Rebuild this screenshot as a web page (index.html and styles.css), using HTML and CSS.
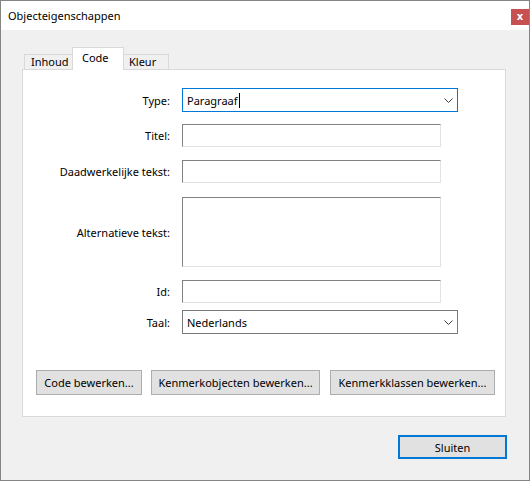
FILE: index.html
```html
<!DOCTYPE html>
<html lang="nl">
<head>
<meta charset="utf-8">
<title>Objecteigenschappen</title>
<link rel="stylesheet" href="styles.css">
</head>
<body>
<div class="window">
  <div class="titlebar">
    <span class="title">Objecteigenschappen</span>
    <span class="close">x</span>
  </div>
  <div class="body">
    <div class="tabs">
      <div class="tab tab-first">Inhoud</div>
      <div class="tab tab-active">Code</div>
      <div class="tab tab-last">Kleur</div>
    </div>
    <div class="panel">
      <div class="form">
        <div class="row row-type">
          <label class="label">Type:</label>
          <div class="select select-focus">
            <span class="value">Paragraaf<span class="caret"></span></span>
            <svg class="chev" width="9" height="5" viewBox="0 0 9 5"><polyline points="0.5,0.5 4.5,4.5 8.5,0.5" fill="none" stroke="#3c3c3c" stroke-width="1"/></svg>
          </div>
        </div>
        <div class="row row-titel">
          <label class="label">Titel:</label>
          <div class="input"></div>
        </div>
        <div class="row row-daad">
          <label class="label">Daadwerkelijke tekst:</label>
          <div class="input"></div>
        </div>
        <div class="row row-alt">
          <label class="label">Alternatieve tekst:</label>
          <div class="input textarea"></div>
        </div>
        <div class="row row-id">
          <label class="label">Id:</label>
          <div class="input"></div>
        </div>
        <div class="row row-taal">
          <label class="label">Taal:</label>
          <div class="select">
            <span class="value">Nederlands</span>
            <svg class="chev" width="9" height="5" viewBox="0 0 9 5"><polyline points="0.5,0.5 4.5,4.5 8.5,0.5" fill="none" stroke="#3c3c3c" stroke-width="1"/></svg>
          </div>
        </div>
      </div>
      <div class="actions">
        <button class="btn btn-code">Code bewerken...</button>
        <button class="btn btn-obj">Kenmerkobjecten bewerken...</button>
        <button class="btn btn-klas">Kenmerkklassen bewerken...</button>
      </div>
    </div>
    <div class="footer">
      <button class="btn btn-close">Sluiten</button>
    </div>
  </div>
</div>
</body>
</html>
```
FILE: styles.css
```css
* { box-sizing: border-box; }
html, body { margin: 0; padding: 0; }
body {
  width: 530px;
  height: 481px;
  font-family: "Noto Sans", "Open Sans", sans-serif;
  font-size: 11px;
  color: #000;
  background: #f0f0f0;
}
.window {
  width: 530px;
  height: 481px;
  border: 1px solid #858585;
  display: flex;
  flex-direction: column;
  background: #f0f0f0;
}
.titlebar {
  height: 29px;
  background: #fff;
  display: flex;
  justify-content: space-between;
  align-items: flex-start;
  flex: none;
}
.title {
  padding-left: 7px;
  line-height: 29px;
}
.close {
  margin-top: 8px;
  width: 18px;
  height: 16px;
  background: #c75050;
  color: #fff;
  font-family: "DejaVu Sans", sans-serif;
  font-weight: bold;
  font-size: 10px;
  line-height: 15px;
  text-align: center;
}
.body {
  flex: 1;
  padding: 17px 23px 0 21px;
  display: flex;
  flex-direction: column;
}
.tabs {
  display: flex;
  align-items: flex-end;
  height: 22px;
  padding-left: 2px;
}
.tab {
  height: 15px;
  line-height: 13px;
  border: 1px solid #d9d9d9;
  border-bottom: none;
  background: #f0f0f0;
  white-space: nowrap;
}
.tab-first { width: 49px; padding-left: 6px; }
.tab-active {
  position: relative;
  z-index: 1;
  width: 52px;
  height: 23px;
  margin-bottom: -1px;
  margin-left: -1px;
  padding-left: 9px;
  padding-top: 2px;
  line-height: 15px;
  background: #fff;
}
.tab-last { width: 46px; margin-left: -1px; padding-left: 5px; }
.panel {
  width: 484px;
  height: 348px;
  background: #fff;
  border: 1px solid #d9d9d9;
  padding: 18px 0 0 0;
}
.form {
  display: flex;
  flex-direction: column;
}
.row {
  display: flex;
  align-items: center;
}
.label {
  width: 147px;
  margin-right: 12px;
  text-align: right;
  white-space: nowrap;
}
.row-titel { margin-top: 12px; }
.row-daad { margin-top: 13px; }
.row-alt { margin-top: 14px; }
.row-id { margin-top: 13px; }
.row-taal { margin-top: 7px; }
.select {
  width: 276px;
  height: 24px;
  border: 1px solid #7a7a7a;
  display: flex;
  align-items: center;
  justify-content: space-between;
  padding: 0 4px 0 4px;
  background: #fff;
}
.select-focus { border-color: #0078d7; }
.value { display: flex; align-items: center; }
.caret {
  display: inline-block;
  width: 1px;
  height: 15px;
  background: #000;
  margin-left: 1px;
}
.chev { display: block; }
.input {
  width: 259px;
  height: 23px;
  background: #fff;
  border-top: 1px solid #828282;
  border-left: 1px solid #828282;
  border-right: 1px solid #e3e3e3;
  border-bottom: 1px solid #e3e3e3;
}
.textarea { height: 70px; }
.actions {
  display: flex;
  margin-top: 36px;
  padding-left: 13px;
}
.btn {
  font-family: inherit;
  font-size: 11px;
  color: #000;
  height: 25px;
  background: #e1e1e1;
  border: 1px solid #adadad;
  padding: 0;
  text-align: center;
  white-space: nowrap;
}
.btn-code { width: 106px; }
.btn-obj { width: 169px; margin-left: 9px; }
.btn-klas { width: 165px; margin-left: 10px; }
.footer {
  display: flex;
  justify-content: flex-end;
  margin-top: 18px;
  margin-right: -1px;
}
.btn-close {
  width: 109px;
  height: 24px;
  border: 2px solid #0078d7;
}
```
